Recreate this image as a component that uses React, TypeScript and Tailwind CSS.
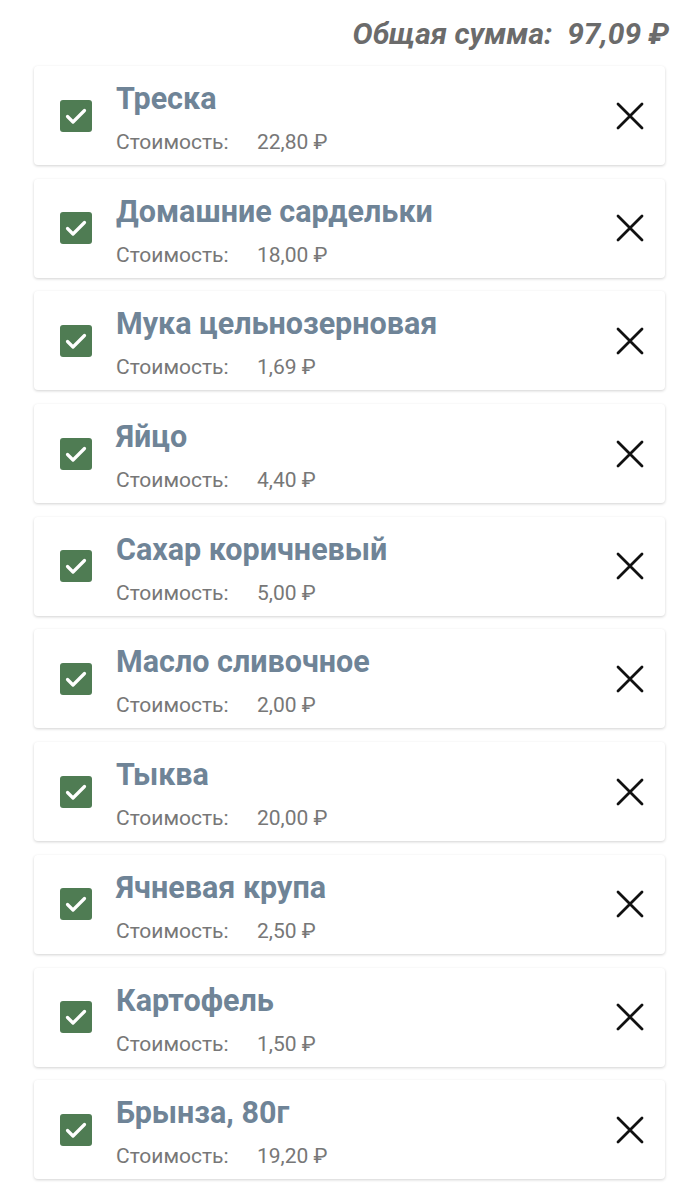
const items = [
  { name: 'Треска', price: '22,80 ₽' },
  { name: 'Домашние сардельки', price: '18,00 ₽' },
  { name: 'Мука цельнозерновая', price: '1,69 ₽' },
  { name: 'Яйцо', price: '4,40 ₽' },
  { name: 'Сахар коричневый', price: '5,00 ₽' },
  { name: 'Масло сливочное', price: '2,00 ₽' },
  { name: 'Тыква', price: '20,00 ₽' },
  { name: 'Ячневая крупа', price: '2,50 ₽' },
  { name: 'Картофель', price: '1,50 ₽' },
  { name: 'Брынза, 80г', price: '19,20 ₽' },
]

function CheckBox() {
  return (
    <div className="w-[32px] h-[32px] rounded-[3px] bg-[#4f7c53] flex items-center justify-center shrink-0">
      <svg width="32" height="32" viewBox="0 0 32 32" fill="none">
        <path d="M7.5 16.5 L13 22 L24.5 10.5" stroke="white" strokeWidth="3.2" strokeLinecap="round" strokeLinejoin="round" />
      </svg>
    </div>
  )
}

function CloseIcon() {
  return (
    <svg width="28" height="28" viewBox="0 0 28 28" fill="none">
      <path d="M2 2 L26 26 M26 2 L2 26" stroke="#111" strokeWidth="2.8" strokeLinecap="round" />
    </svg>
  )
}

export default function App() {
  return (
    <div className="min-h-[1200px] bg-white font-['Roboto',sans-serif]">
      {/* итог */}
      <div className="flex justify-end pr-[11px] pt-[17px] pb-[15px]">
        <div className="text-[30px] leading-[34px] font-bold italic text-[#6b6b6b] whitespace-pre">
          Общая сумма:  97,09 ₽
        </div>
      </div>

      <div className="flex flex-col gap-[13.7px] pl-[34px] pr-[15px]">
        {items.map((item) => (
          <div
            key={item.name}
            className="h-[99px] bg-white rounded-[4px] shadow-[0_1px_3px_rgba(0,0,0,0.18)] flex items-center pl-[26px] pr-[21px]"
          >
            <CheckBox />
            <div className="flex-1 ml-[24px] self-start pt-[15px]">
              <div className="text-[30.5px] leading-[36px] font-bold text-[#6f8497]">{item.name}</div>
              <div className="flex mt-[12px] text-[21px] leading-[26px] text-[#777777]">
                <span className="w-[141px]">Стоимость:</span>
                <span>{item.price}</span>
              </div>
            </div>
            <CloseIcon />
          </div>
        ))}
      </div>
    </div>
  )
}
